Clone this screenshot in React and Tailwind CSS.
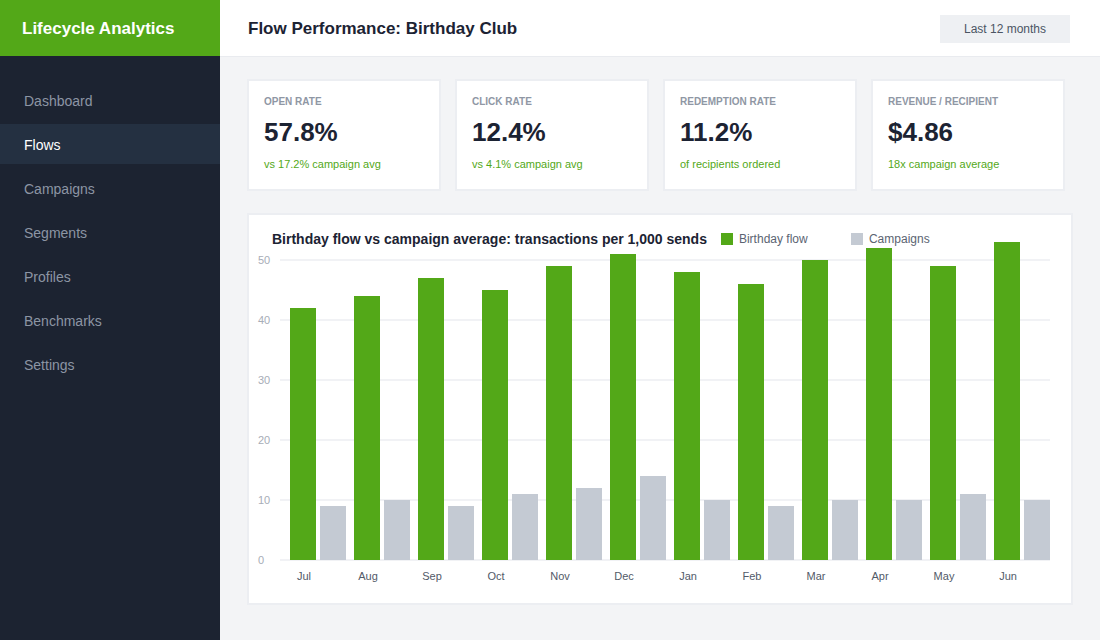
const navItems = ["Dashboard", "Flows", "Campaigns", "Segments", "Profiles", "Benchmarks", "Settings"];

const stats = [
  { label: "Open rate", value: "57.8%", note: "vs 17.2% campaign avg" },
  { label: "Click rate", value: "12.4%", note: "vs 4.1% campaign avg" },
  { label: "Redemption rate", value: "11.2%", note: "of recipients ordered" },
  { label: "Revenue / recipient", value: "$4.86", note: "18x campaign average" },
];

const months = [
  { m: "Jul", flow: 42, camp: 9 },
  { m: "Aug", flow: 44, camp: 10 },
  { m: "Sep", flow: 47, camp: 9 },
  { m: "Oct", flow: 45, camp: 11 },
  { m: "Nov", flow: 49, camp: 12 },
  { m: "Dec", flow: 51, camp: 14 },
  { m: "Jan", flow: 48, camp: 10 },
  { m: "Feb", flow: 46, camp: 9 },
  { m: "Mar", flow: 50, camp: 10 },
  { m: "Apr", flow: 52, camp: 10 },
  { m: "May", flow: 49, camp: 11 },
  { m: "Jun", flow: 53, camp: 10 },
];

const GREEN = "#53a818";
const GRAY = "#c4cad3";

function Sidebar() {
  return (
    <aside className="w-[220px] shrink-0 bg-[#1c2331] flex flex-col">
      <div className="h-[56px] bg-[#53a818] flex items-center px-[22px] pt-[2px]">
        <span className="text-white text-[17px] font-bold">Lifecycle Analytics</span>
      </div>
      <nav className="pt-[24px] flex flex-col gap-1">
        {navItems.map((item) => (
          <div
            key={item}
            className={
              item === "Flows"
                ? "h-10 flex items-center px-6 pt-[2px] text-[14px] text-white bg-[#243041]"
                : "h-10 flex items-center px-6 pt-[2px] text-[14px] text-[#8c95a4]"
            }
          >
            {item}
          </div>
        ))}
      </nav>
    </aside>
  );
}

function StatCard({ label, value, note }) {
  return (
    <div className="bg-white border-2 border-[#eceef2] pt-[15px] px-[15px] pb-[18px]">
      <div className="text-[10px] leading-3 font-bold uppercase text-[#8f97a4]">{label}</div>
      <div className="mt-[9px] text-[26px] leading-[30px] font-bold text-[#1c2333]">{value}</div>
      <div className="mt-[10px] text-[11px] leading-[14px] text-[#53a818]">{note}</div>
    </div>
  );
}

// bars taller than 50 run up past the top gridline, so the svg is not clipped
function Chart() {
  const ticks = [0, 10, 20, 30, 40, 50];
  const base = 312;
  return (
    <svg width="822" height="352" className="block overflow-visible">
      {ticks.map((t) => (
        <g key={t}>
          <line x1="31" x2="801" y1={base - t * 6} y2={base - t * 6} stroke="#f1f2f5" strokeWidth="2" />
          <text x="9" y={base - t * 6 + 4} fontSize="11" fill="#a7adb7">
            {t}
          </text>
        </g>
      ))}
      {months.map((d, i) => (
        <g key={d.m}>
          <rect x={41 + i * 64} y={base - d.flow * 6} width="26" height={d.flow * 6} fill={GREEN} />
          <rect x={71 + i * 64} y={base - d.camp * 6} width="26" height={d.camp * 6} fill={GRAY} />
          <text x={55 + i * 64} y={base + 20} fontSize="11" fill="#525a68" textAnchor="middle">
            {d.m}
          </text>
        </g>
      ))}
    </svg>
  );
}

export default function App() {
  return (
    <div className="flex w-[1100px] h-[640px] overflow-hidden font-['Liberation_Sans',Arial,sans-serif]">
      <Sidebar />
      <main className="flex-1 bg-[#f3f4f6] flex flex-col">
        <header className="h-[57px] bg-white border-b border-[#e9ebef] flex items-center justify-between pl-[28px] pr-[30px] pt-[1px]">
          <h1 className="text-[17px] font-bold text-[#1c2333]">Flow Performance: Birthday Club</h1>
          <button className="w-[130px] h-[28px] bg-[#eef0f3] text-[12px] text-[#4b5563]">Last 12 months</button>
        </header>
        <div className="px-[27px] pt-[22px]">
          <div className="grid grid-cols-[repeat(4,194px)] gap-[14px]">
            {stats.map((s) => (
              <StatCard key={s.label} {...s} />
            ))}
          </div>
          <section className="mt-[22px] bg-white border-2 border-[#eceef2] h-[392px]">
            <div className="flex items-center pt-[15px] pl-[23px] h-[18px] box-content">
              <h2 className="text-[14px] leading-[18px] font-bold text-[#1c2333]">
                Birthday flow vs campaign average: transactions per 1,000 sends
              </h2>
              <div className="flex ml-[14px]">
                <div className="w-[130px] flex items-center gap-[6px]">
                  <span className="w-3 h-3 bg-[#53a818]" />
                  <span className="text-[12px] text-[#5b6472]">Birthday flow</span>
                </div>
                <div className="flex items-center gap-[6px]">
                  <span className="w-3 h-3 bg-[#c4cad3]" />
                  <span className="text-[12px] text-[#5b6472]">Campaigns</span>
                </div>
              </div>
            </div>
            <Chart />
          </section>
        </div>
      </main>
    </div>
  );
}
